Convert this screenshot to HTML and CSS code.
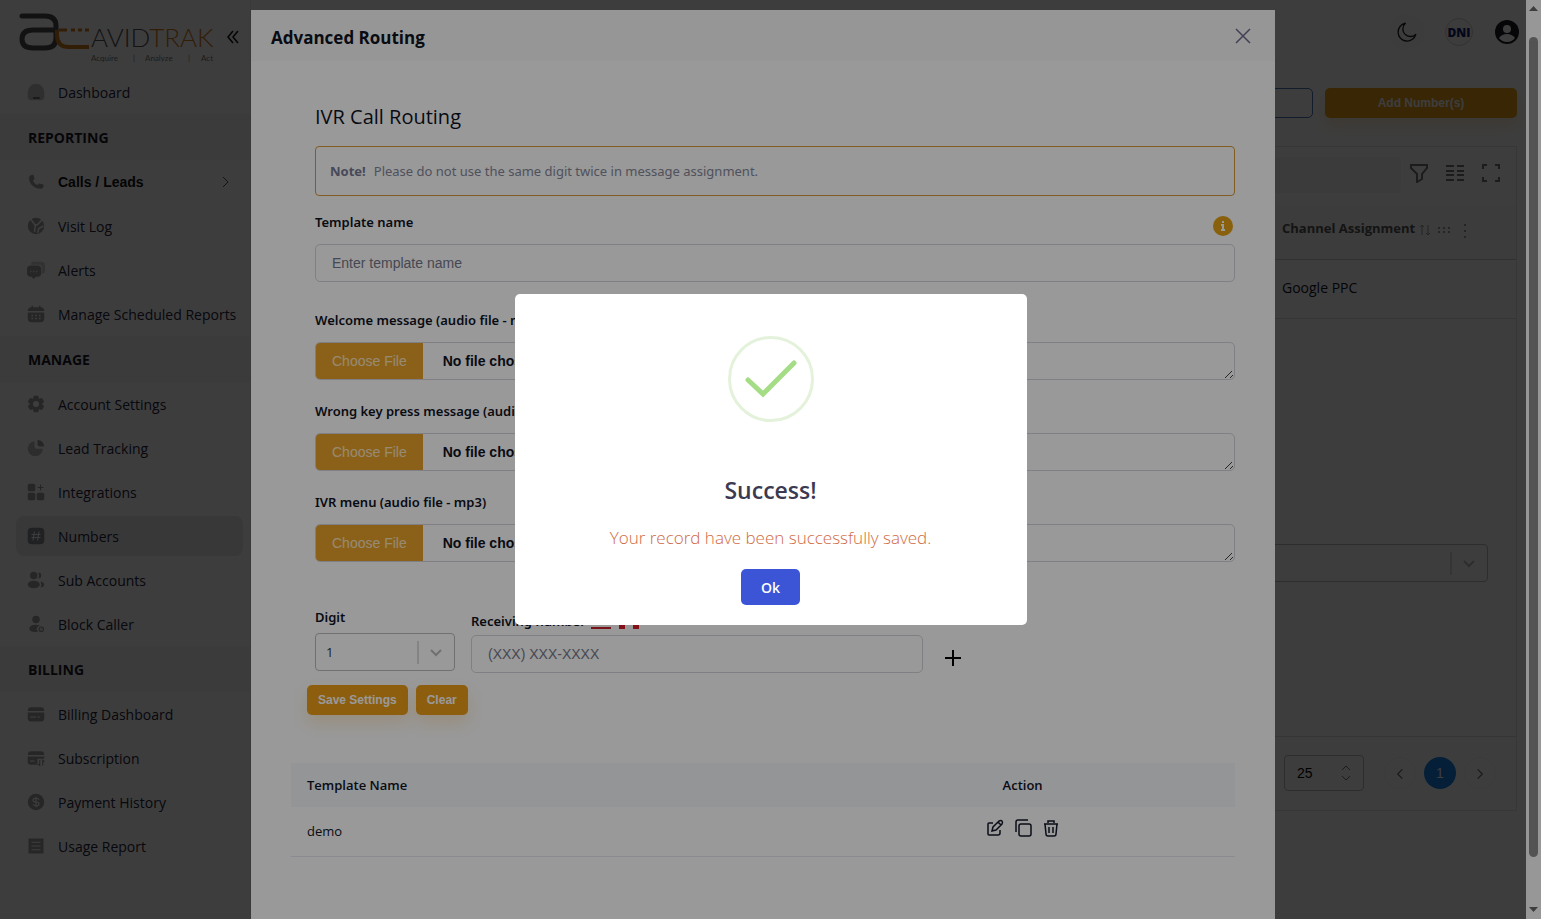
FILE: index.html
```html
<!DOCTYPE html>
<html lang="en">
<head>
    <meta charset="UTF-8">
    <meta name="viewport" content="width=device-width, initial-scale=1.0">
    <title>AvidTrak - Numbers</title>
    <link rel="stylesheet" href="styles.css">
</head>
<body>
    <div class="page">
        <aside class="sidebar">
            <div class="brand">
                <svg class="logo" width="200" height="54" viewBox="0 0 200 54" role="img" aria-label="AvidTrak">
                    <path d="M4 7h23q11 0 11 10v12q0 10-11 10H15Q4 39 4 30t11-9h23" fill="none" stroke="#4c4c4c" stroke-width="5" stroke-linecap="round"/>
                    <path d="M39 21v5q0 12 12 12h20" fill="none" stroke="#d07c1c" stroke-width="4"/>
                    <path d="M41 21h8M53 21h4M60 21h4M67 21h4" stroke="#d07c1c" stroke-width="3"/>
                    <text x="73" y="38" class="logo-name">AVID<tspan fill="#d07c1c">TRAK</tspan></text>
                    <text x="73" y="52" class="logo-tag">Acquire</text>
                    <text x="115" y="52" class="logo-tag">|</text>
                    <text x="127" y="52" class="logo-tag">Analyze</text>
                    <text x="170" y="52" class="logo-tag">|</text>
                    <text x="183" y="52" class="logo-tag">Act</text>
                </svg>
                <button class="collapse" aria-label="Collapse menu">
                    <svg width="14" height="16" viewBox="0 0 14 16" fill="none" stroke="#111" stroke-width="1.5"><path d="M7 2L2 8l5 6M12 2L7 8l5 6"/></svg>
                </button>
            </div>
            <nav>
                <a href="#" class="nav-item">
                    <svg viewBox="0 0 24 24"><path opacity=".6" d="M12 1a11 11 0 0 1 11 11v6a5 5 0 0 1-5 5H6a5 5 0 0 1-5-5v-6A11 11 0 0 1 12 1z"/><path d="M8 19h9v2H8z" fill="#555"/></svg>
                    Dashboard
                </a>
                <h6 class="nav-title">REPORTING</h6>
                <a href="#" class="nav-item parent">
                    <svg viewBox="0 0 24 24"><path d="M3 5c1-2 4-4 6-2l1 5-2 2c1 3 3 5 6 6l2-2 5 1c3 2 0 6-2 6C10 22 1 13 3 5z"/></svg>
                    Calls / Leads
                    <svg class="arrow" viewBox="0 0 12 12"><path d="M4 1l5 5-5 5"/></svg>
                </a>
                <a href="#" class="nav-item">
                    <svg viewBox="0 0 24 24"><circle cx="12" cy="12" r="11"/><path d="M5 3l6 8-1 9M20 4l-6 6-3 1M14 21l2-6 6-3" fill="none" stroke="#fff" stroke-width="2"/></svg>
                    Visit Log
                </a>
                <a href="#" class="nav-item">
                    <svg viewBox="0 0 24 24"><path opacity=".5" d="M9 1h10a5 5 0 0 1 5 5v7a4 4 0 0 1-4 4V9a4 4 0 0 0-4-4H5q1-4 4-4z"/><path d="M5 6h9a5 5 0 0 1 5 5v5a5 5 0 0 1-5 5h-2l-3 3-3-3H5a5 5 0 0 1-5-5v-5a5 5 0 0 1 5-5z"/><path d="M4 14h2m2 0h2m2 0h2" stroke="#ddd" stroke-width="2"/></svg>
                    Alerts
                </a>
                <a href="#" class="nav-item">
                    <svg viewBox="0 0 24 24"><path d="M6 1h2v2h8V1h2v2q5 0 5 5H1q0-5 5-5zM1 10h22v8q0 5-5 5H6q-5 0-5-5z"/><path d="M6 14h2m3 0h2m3 0h2M6 18h2m3 0h2m3 0h2" stroke="#fff" stroke-width="2"/></svg>
                    Manage Scheduled Reports
                </a>
                <h6 class="nav-title">MANAGE</h6>
                <a href="#" class="nav-item">
                    <svg viewBox="0 0 24 24"><path fill-rule="evenodd" d="M9 1h6l1 4 4-1 3 5-3 3 3 3-3 5-4-1-1 4H9l-1-4-4 1-3-5 3-3-3-3 3-5 4 1zM12 8a4 4 0 1 0 0 8 4 4 0 0 0 0-8z"/></svg>
                    Account Settings
                </a>
                <a href="#" class="nav-item">
                    <svg viewBox="0 0 24 24"><path opacity=".7" d="M10 3v7q0 3 3 3h8a10 10 0 1 1-11-10z"/><path d="M14 1q8 1 9 9h-6q-3 0-3-3z"/></svg>
                    Lead Tracking
                </a>
                <a href="#" class="nav-item">
                    <svg viewBox="0 0 24 24"><rect x="1" y="1" width="10" height="10" rx="2"/><rect x="1" y="13" width="10" height="10" rx="2"/><rect x="13" y="13" width="10" height="10" rx="2"/><path d="M18 2v8m-4-4h8" stroke="#999" stroke-width="1.5"/></svg>
                    Integrations
                </a>
                <a href="#" class="nav-item active">
                    <svg viewBox="0 0 24 24"><rect x="1" y="1" width="22" height="22" rx="5"/><path d="M10 6L8 18m8-12l-2 12M6 10h12M6 14h12" stroke="#fff" stroke-width="1.5"/></svg>
                    Numbers
                </a>
                <a href="#" class="nav-item">
                    <svg viewBox="0 0 24 24"><circle cx="9" cy="6" r="5"/><path d="M15 2a4 4 0 0 1 0 8q2-4 0-8z"/><ellipse cx="9" cy="18" rx="8" ry="5"/><path d="M18 14q5 1 5 4t-5 4q2-4 0-8z"/></svg>
                    Sub Accounts
                </a>
                <a href="#" class="nav-item">
                    <svg viewBox="0 0 24 24"><circle cx="12" cy="6" r="5"/><path d="M12 13c4 0 7 1 8 2a4 4 0 0 0-5 7c-6 2-12 0-12-4 0-3 4-5 9-5z"/><circle cx="19" cy="19" r="3" fill="none" stroke="#999" stroke-width="1.5"/><path d="M17 21l4-4" stroke="#999"/></svg>
                    Block Caller
                </a>
                <h6 class="nav-title">BILLING</h6>
                <a href="#" class="nav-item">
                    <svg viewBox="0 0 24 24"><path d="M5 3h14q4 0 4 5H1q0-5 4-5zM1 10h22v7q0 5-4 5H5q-4 0-4-5z"/><path d="M4 16h8m2 0h3" stroke="#fff" stroke-width="1.5"/></svg>
                    Billing Dashboard
                </a>
                <a href="#" class="nav-item">
                    <svg viewBox="0 0 24 24"><path d="M5 3h14q4 0 4 5H1q0-5 4-5zM1 10h22v3h-9v8H5q-4 0-4-4z"/><path d="M4 16h6" stroke="#fff" stroke-width="1.5"/><path d="M17 15v7l-2-2m6 2v-7l2 2" fill="none" stroke="#999" stroke-width="1.5"/></svg>
                    Subscription
                </a>
                <a href="#" class="nav-item">
                    <svg viewBox="0 0 24 24"><circle cx="12" cy="12" r="11"/><path d="M16 9q-1-2-4-2-4 0-4 2.500t4 2.500 4 2.500-4 2.500q-3 0-4-2M12 5v14" fill="none" stroke="#fff" stroke-width="1.500"/></svg>
                    Payment History
                </a>
                <a href="#" class="nav-item">
                    <svg viewBox="0 0 24 24"><path d="M2 2h20v20H2z"/><path d="M6 7h12M6 12h12M6 17h12" stroke="#fff" stroke-width="1.5"/></svg>
                    Usage Report
                </a>
            </nav>
        </aside>

        <main class="main">
            <header class="topbar">
                <button class="round" aria-label="Dark mode">
                    <svg width="20" height="20" viewBox="0 0 24 24" fill="none" stroke="#222" stroke-width="1.6" stroke-linejoin="round"><path d="M10 1.500A10.800 10.800 0 1 0 22.500 15 9 9 0 0 1 10 1.500z"/></svg>
                </button>
                <button class="round dni">DNI</button>
                <button class="round avatar" aria-label="Profile">
                    <svg width="24" height="24" viewBox="0 0 24 24"><circle cx="12" cy="12" r="12" fill="#1a1a24"/><circle cx="12" cy="9" r="4" fill="#fff"/><path d="M4 18q3-4 8-4t8 4q-3 4-8 4t-8-4z" fill="#fff"/></svg>
                </button>
            </header>
            <div class="page-actions">
                <button class="btn-outline" aria-label="Number groups"></button>
                <button class="btn btn-wide">Add Number(s)</button>
            </div>
            <section class="card">
                <div class="toolbar">
                    <input type="search" aria-label="Search numbers">
                    <button aria-label="Filters">
                        <svg viewBox="0 0 20 20"><path d="M2 2h16v3l-5 6v5l-5 3v-8L2 5z"/></svg>
                    </button>
                    <button aria-label="Columns">
                        <svg viewBox="0 0 20 20"><path d="M1 3h8M1 8h8M1 12h8M1 17h8M12 3h7M12 8h7M12 12h7M12 17h7"/></svg>
                    </button>
                    <button aria-label="Full screen">
                        <svg viewBox="0 0 20 20"><path d="M2 6V2h4M14 2h4v4M18 14v4h-4M6 18H2v-4"/></svg>
                    </button>
                </div>
                <table class="numbers">
                    <thead>
                        <tr><th></th><th>Channel Assignment
                            <svg width="54" height="16" viewBox="0 0 54 16" fill="none" stroke="#999" stroke-width="1"><path d="M3 13V3L1 5m2-2l2 2M9 3v10l-2-2m2 2l2-2"/><path d="M19 6h12M19 10h12" stroke-width="2" stroke-dasharray="2 3"/><path d="M46 2v14" stroke-width="2" stroke-dasharray="2 4"/></svg>
                        </th></tr>
                    </thead>
                    <tbody>
                        <tr><td></td><td>Google PPC</td></tr>
                    </tbody>
                </table>
                <div class="card-body">
                    <div class="select-box">
                        <select aria-label="Assign channel"><option></option></select>
                        <svg viewBox="0 0 38 36"><path d="M1 7v23"/><path class="chev" d="M14 16l5 5 5-5"/></svg>
                    </div>
                </div>
                <footer class="pager">
                    <div class="select-box page-size">
                        <select aria-label="Rows per page"><option>25</option></select>
                        <svg viewBox="0 0 38 36"><path class="chev" d="M16 15l4-4 4 4M16 21l4 4 4-4"/></svg>
                    </div>
                    <button aria-label="Previous page"><svg viewBox="0 0 12 12"><path d="M8 2L4 6l4 4"/></svg></button>
                    <button class="current">1</button>
                    <button aria-label="Next page"><svg viewBox="0 0 12 12"><path d="M4 2l4 4-4 4"/></svg></button>
                </footer>
            </section>
        </main>
    </div>

    <!-- Advanced routing modal -->
    <div class="modal-layer">
        <div class="modal-backdrop">
            <div class="modal" role="dialog" aria-labelledby="modal-title">
                <div class="modal-header">
                    <h3 id="modal-title">Advanced Routing</h3>
                    <button aria-label="Close">
                        <svg width="16" height="16" viewBox="0 0 16 16" stroke="#6e6b8a" stroke-width="1.5"><path d="M1 1l14 14M15 1L1 15"/></svg>
                    </button>
                </div>
                <form class="modal-body">
                    <div class="fields">
                        <h2>IVR Call Routing</h2>
                        <div class="alert"><strong>Note!</strong>Please do not use the same digit twice in message assignment.</div>
                        <div class="group first">
                            <div class="label-row">
                                <label for="template">Template name</label>
                                <svg width="20" height="20" viewBox="0 0 20 20"><circle cx="10" cy="10" r="10" fill="#e5a013"/><path d="M8 9h2v5M8 14h4M10 5v2" fill="none" stroke="#fff" stroke-width="2"/></svg>
                            </div>
                            <input type="text" id="template" placeholder="Enter template name">
                        </div>
                        <div class="group">
                            <label for="welcome">Welcome message (audio file - mp3)</label>
                            <div class="file-box">
                                <input type="file" id="welcome">
                                <svg class="grip" viewBox="0 0 10 10"><path d="M1 9l7-7M6 9l3-3"/></svg>
                            </div>
                        </div>
                        <div class="group">
                            <label for="wrong">Wrong key press message (audio file - mp3)</label>
                            <div class="file-box">
                                <input type="file" id="wrong">
                                <svg class="grip" viewBox="0 0 10 10"><path d="M1 9l7-7M6 9l3-3"/></svg>
                            </div>
                        </div>
                        <div class="group">
                            <label for="menu">IVR menu (audio file - mp3)</label>
                            <div class="file-box">
                                <input type="file" id="menu">
                                <svg class="grip" viewBox="0 0 10 10"><path d="M1 9l7-7M6 9l3-3"/></svg>
                            </div>
                        </div>
                        <div class="digit-row">
                            <div class="digit">
                                <label for="digit">Digit</label>
                                <div class="select-box">
                                    <select id="digit"><option>1</option></select>
                                    <svg viewBox="0 0 38 36"><path d="M1 7v23"/><path class="chev" d="M14 16l5 5 5-5"/></svg>
                                </div>
                            </div>
                            <div class="receiving">
                                <label for="receiving">Receiving number
                                    <svg width="20" height="14" viewBox="0 0 20 14"><path d="M0 0h20v14H0z" fill="#fff"/><path d="M0 1h20M0 5h20M0 9h20M0 13h20" stroke="#c8202f" stroke-width="2"/><path d="M0 0h9v8H0z" fill="#33407a"/></svg>
                                    <svg width="20" height="14" viewBox="0 0 20 14"><path d="M0 0h20v14H0z" fill="#fff"/><path d="M0 0h6v14H0zM14 0h6v14h-6zM10 3l3 4-3 3-3-3z" fill="#d81f2a"/></svg>
                                </label>
                                <input type="tel" id="receiving" placeholder="(XXX) XXX-XXXX">
                            </div>
                            <button type="button" class="add" aria-label="Add digit">
                                <svg width="16" height="16" viewBox="0 0 16 16" stroke="#000" stroke-width="2"><path d="M8 0v16M0 8h16"/></svg>
                            </button>
                        </div>
                    </div>
                    <div class="form-actions">
                        <button type="button" class="btn">Save Settings</button>
                        <button type="button" class="btn">Clear</button>
                    </div>
                    <table class="templates">
                        <thead>
                            <tr><th>Template Name</th><th>Action</th></tr>
                        </thead>
                        <tbody>
                            <tr>
                                <td>demo</td>
                                <td>
                                    <div class="row-actions">
                                        <button type="button" aria-label="Edit"><svg viewBox="0 0 18 18"><path d="M7 4H3q-1 0-1 1v10q0 1 1 1h9q2 0 2-2v-3"/><path d="M6 12l1-4 6-6q2-1 3 0t0 3l-6 6zM12 3l3 3"/></svg></button>
                                        <button type="button" aria-label="Copy"><svg viewBox="0 0 18 18"><rect x="5" y="5" width="12" height="12" rx="2"/><path d="M2 13V3q0-2 2-2h10"/></svg></button>
                                        <button type="button" aria-label="Delete"><svg viewBox="0 0 18 18"><path d="M2 5h14M6 4V2h6v2M3 5l1 10q0 2 2 2h6q2 0 2-2l1-10M7 8v6M11 8v6"/></svg></button>
                                    </div>
                                </td>
                            </tr>
                        </tbody>
                    </table>
                </form>
            </div>
        </div>
        <div class="scrollbar">
            <svg width="9" height="5" viewBox="0 0 9 5"><path d="M4.500 0L9 5H0z"/></svg>
            <span class="thumb"></span>
            <svg width="9" height="5" viewBox="0 0 9 5"><path d="M4.500 5L9 0H0z"/></svg>
        </div>
    </div>

    <!-- Success alert -->
    <div class="swal-overlay">
        <div class="swal" role="alertdialog" aria-labelledby="swal-title">
            <svg class="swal-icon" viewBox="0 0 86 86" fill="none">
                <circle cx="43" cy="43" r="41.500" stroke="#e4f2db" stroke-width="3"/>
                <path d="M20 44l15 14 31-31" stroke="#a5dc86" stroke-width="5" stroke-linecap="round"/>
            </svg>
            <h2 id="swal-title">Success!</h2>
            <p>Your record have been successfully saved.</p>
            <button>Ok</button>
        </div>
    </div>
</body>
</html>
```
FILE: styles.css
```css
* {
    box-sizing: border-box;
}

body {
    margin: 0;
    height: 100vh;
    overflow: hidden;
    background-color: #fff;
    font-family: "Open Sans", "Noto Sans", sans-serif;
    font-size: 14px;
    color: #10131f;
}

button, input, select {
    font-family: "Liberation Sans", Arial, sans-serif;
    font-size: 14px;
}

button {
    border: none;
    background: none;
    padding: 0;
    cursor: pointer;
}

h2, h3, h6, p {
    margin: 0;
}

label {
    display: block;
    font-family: "Noto Sans", sans-serif;
    font-weight: 600;
    line-height: 20px;
    font-size: 13px;
}

.page {
    display: flex;
    height: 100%;
    padding-right: 15px; /* room for the scrollbar */
}

/* Sidebar */
.sidebar {
    width: 251px;
    flex-shrink: 0;
    border-right: 1px solid #eee;
}

.sidebar nav {
    display: flex;
    flex-direction: column;
}

.brand {
    display: flex;
    align-items: center;
    height: 70px;
    padding: 2px 12px 0 18px;
}

.logo {
    flex-shrink: 0;
}

.logo-name {
    font-family: Lato, sans-serif;
    font-weight: 300;
    font-size: 26px;
    fill: #555;
}

.logo-tag {
    font-family: Lato, sans-serif;
    font-size: 8px;
    fill: #777;
}

.collapse {
    margin: 4px 0 0 8px;
}

.nav-item {
    display: flex;
    align-items: center;
    gap: 13px;
    height: 40px;
    margin: 2px 7px 2px 16px;
    padding: 0 12px 0 11px;
    border-radius: 8px;
    color: #23233a;
    text-decoration: none;
    white-space: nowrap;
}

.nav-item svg {
    width: 18px;
    height: 18px;
    flex-shrink: 0;
    fill: #a0a0a0;
}

.nav-item.active {
    background-color: #e9eaec;
}

.nav-item.active svg {
    fill: #85898f;
}

.nav-item.parent {
    font-family: "Liberation Sans", Arial, sans-serif;
    font-weight: bold;
    color: #111;
}

.nav-item .arrow {
    width: 12px;
    height: 12px;
    margin-left: auto;
    fill: none;
    stroke: #555;
}

.nav-title {
    height: 46px;
    padding: 0 28px;
    font-size: 14px;
    line-height: 48px;
    background-color: #f6f6f6;
    color: #1a1a2a;
}

/* Numbers page */
.main {
    flex: 1;
    min-width: 0;
    padding: 0 9px 0 24px;
}

.topbar {
    display: flex;
    justify-content: flex-end;
    align-items: center;
    gap: 16px;
    height: 64px;
    margin-right: -9px;
    padding-right: 1px;
}

.round {
    display: flex;
    align-items: center;
    justify-content: center;
    width: 36px;
    height: 36px;
    border-radius: 50%;
    background-color: #fafafa;
}

.round.dni {
    width: 28px;
    height: 28px;
    margin: 0 4px;
    border: 1px solid #ddd0c0;
    font-family: "Open Sans", sans-serif;
    font-size: 12px;
    font-weight: 800;
    color: #12256e;
}

.round.avatar {
    background: none;
    margin-left: -4px;
}

.page-actions {
    display: flex;
    justify-content: flex-end;
    gap: 12px;
    margin: 24px 0 28px;
}

.btn {
    height: 30px;
    padding: 0 11px;
    border-radius: 5px;
    background-color: #ea9d18;
    box-shadow: 0 8px 16px rgba(234, 157, 24, 0.2);
    color: #fff;
    font-size: 12px;
    font-weight: bold;
}

.btn-wide {
    width: 192px;
}

.btn-outline {
    width: 192px;
    height: 30px;
    border: 1px solid #4d78b8;
    border-radius: 5px;
}

.card {
    border: 1px solid #e6e6e6;
}

.toolbar {
    display: flex;
    align-items: center;
    height: 59px;
    padding: 0 7px 4px;
}

.toolbar input {
    flex: 1;
    height: 36px;
    border: none;
    border-radius: 4px;
    background-color: #f5f5f5;
}

.toolbar button {
    width: 36px;
    height: 36px;
}

.toolbar svg {
    width: 20px;
    height: 20px;
    fill: none;
    stroke: #777;
    stroke-width: 2;
}

.numbers {
    width: 100%;
    border-collapse: collapse;
}

.numbers th {
    height: 53px;
    padding: 0 0 8px;
    text-align: left;
    font-size: 13px;
    background-color: #f9f9f9;
    border-bottom: 1px solid #ccc;
    color: #555;
    white-space: nowrap;
}

.numbers th svg {
    vertical-align: middle;
}

.numbers td {
    height: 59px;
    padding: 0 0 2px;
    border-bottom: 1px solid #ddd;
}

.numbers tr > :last-child {
    width: 234px;
}

.card-body {
    height: 417px;
    padding: 225px 28px 0 0;
}

/* Select with divider and arrow, as used in forms and the pager */
.select-box {
    position: relative;
    height: 38px;
}

.select-box select {
    width: 100%;
    height: 100%;
    padding: 0 10px;
    border: 1px solid #bbb;
    border-radius: 4px;
    background-color: transparent;
    color: #333;
    appearance: none;
}

.select-box svg {
    position: absolute;
    right: 0;
    top: 0;
    width: 38px;
    height: 100%;
    fill: none;
    stroke: #bbb;
    pointer-events: none;
}

.select-box .chev {
    stroke: #bbb;
    stroke-width: 2;
}

.pager {
    display: flex;
    justify-content: flex-end;
    align-items: center;
    gap: 8px;
    height: 74px;
    padding-right: 20px;
    border-top: 1px solid #ddd;
}

.page-size {
    width: 80px;
    height: 36px;
    margin-right: 12px;
}

.page-size select {
    padding: 0 12px;
    color: #000;
}

.page-size .chev {
    stroke-width: 1;
    stroke: #777;
}

.pager button {
    width: 32px;
    height: 32px;
    border: 1px solid #f4f4f4;
    border-radius: 50%;
}

.pager button svg {
    width: 14px;
    height: 14px;
    fill: none;
    stroke: #666;
    vertical-align: middle;
}

.pager .current {
    border: none;
    background-color: #1283e6;
    color: #fff;
}

/* Modal */
.modal-layer {
    position: fixed;
    inset: 0;
    display: flex;
}

.modal-backdrop {
    flex: 1;
    padding-top: 10px;
    background-color: rgba(0, 0, 0, 0.6);
}

.modal {
    max-width: 1024px;
    min-height: 100%;
    margin: 0 auto;
    background-color: #fff;
}

.modal-header {
    display: flex;
    justify-content: space-between;
    align-items: center;
    height: 51px;
    padding: 3px 24px 0 20px;
    background-color: #fbfbfb;
}

.modal-header h3 {
    font-size: 17px;
}

.modal-body {
    padding: 40px;
}

.fields {
    padding-left: 24px;
}

.fields h2 {
    margin-bottom: 13px;
    font-size: 20px;
    font-weight: 500;
    line-height: 32px;
}

.alert {
    height: 50px;
    margin-bottom: 16px;
    padding: 0 14px;
    border: 1px solid #d99a3a;
    border-radius: 4px;
    line-height: 48px;
    font-family: "Noto Sans", sans-serif;
    font-size: 13px;
    color: #85889a;
}

.alert strong {
    margin-right: 8px;
    color: #777a94;
}

.group {
    margin-bottom: 21px;
}

.group.first {
    margin-bottom: 28px;
}

.group > label {
    margin-bottom: 12px;
}

.label-row {
    display: flex;
    justify-content: space-between;
    height: 24px;
    margin-bottom: 8px;
    padding-right: 2px;
}

.label-row svg {
    align-self: flex-end;
}

.fields input {
    display: block;
    width: 100%;
    height: 38px;
    border: 1px solid #d5d5dc;
    border-radius: 5px;
    background-color: #fff;
}

.fields input[type="text"], .fields input[type="tel"] {
    padding: 0 16px;
}

.fields input::placeholder {
    color: #75788a;
}

.file-box {
    position: relative;
}

.file-box input {
    padding: 0;
    overflow: hidden;
    font-weight: bold;
    color: #10131f;
}

.file-box input::file-selector-button {
    height: 36px;
    margin: 0 20px 0 0;
    padding: 0 16px;
    border: none;
    background-color: #e8a22c;
    color: #fbe6c0;
    font-family: "Liberation Sans", Arial, sans-serif;
    font-size: 14px;
    font-weight: normal;
}

.grip {
    position: absolute;
    right: 1px;
    bottom: 1px;
    width: 10px;
    height: 10px;
    stroke: #444;
}

.digit-row {
    display: flex;
    gap: 16px;
    margin-top: 45px;
}

.digit {
    width: 140px;
}

.digit label {
    margin-bottom: 6px;
}

.digit select {
    font-family: "Open Sans", sans-serif;
    font-size: 13px;
}

.receiving {
    flex: 0 1 452px;
    padding-top: 4px;
}

.receiving label {
    margin-bottom: 4px;
}

.receiving svg {
    margin: 0 2px;
    vertical-align: middle;
}

.add {
    align-self: flex-end;
    width: 28px;
    height: 28px;
}

.form-actions {
    display: flex;
    gap: 8px;
    margin: 12px 0 48px 16px;
}

.templates {
    width: 100%;
    border-collapse: collapse;
}

.templates th {
    width: 55%;
    height: 44px;
    padding: 0 16px;
    background-color: #f6f8fc;
    font-size: 13px;
    font-weight: 600;
    text-align: left;
}

.templates th:last-child {
    width: 45%;
    text-align: center;
}

.templates td {
    height: 49px;
    padding: 0 16px;
    border-bottom: 1px solid #e8e8ee;
    font-size: 13px;
}

.row-actions {
    display: flex;
    justify-content: center;
    gap: 10px;
    padding-bottom: 6px;
}

.row-actions svg {
    display: block;
    width: 18px;
    height: 18px;
    fill: none;
    stroke: #14182a;
    stroke-width: 1.5;
}

.scrollbar {
    display: flex;
    flex-direction: column;
    align-items: center;
    gap: 26px;
    width: 15px;
    padding: 6px 0 7px;
    background-color: #fcfcfc;
}

.scrollbar svg {
    fill: #666;
}

.scrollbar .thumb {
    width: 9px;
    height: 820px;
    border-radius: 5px;
    background-color: #8b8b8b;
}

.scrollbar svg:last-child {
    margin-top: auto;
}

/* Success alert */
.swal-overlay {
    position: fixed;
    inset: 0;
    display: flex;
    align-items: center;
    justify-content: center;
    background-color: rgba(0, 0, 0, 0.4);
}

.swal {
    width: 512px;
    padding: 42px 20px 20px;
    border-radius: 5px;
    background-color: #fff;
    text-align: center;
}

.swal-icon {
    display: block;
    width: 86px;
    height: 86px;
    margin: 0 auto 52px;
}

.swal h2 {
    font-size: 23px;
    font-weight: 600;
    line-height: 32px;
    color: #3b3a50;
}

.swal p {
    margin: 18px 0;
    font-size: 17px;
    font-weight: 300;
    line-height: 27px;
    color: #cf6a45;
}

.swal button {
    width: 59px;
    height: 36px;
    border-radius: 5px;
    background-color: #3b55d6;
    font-family: "Open Sans", sans-serif;
    font-weight: 600;
    color: #fff;
}
```
